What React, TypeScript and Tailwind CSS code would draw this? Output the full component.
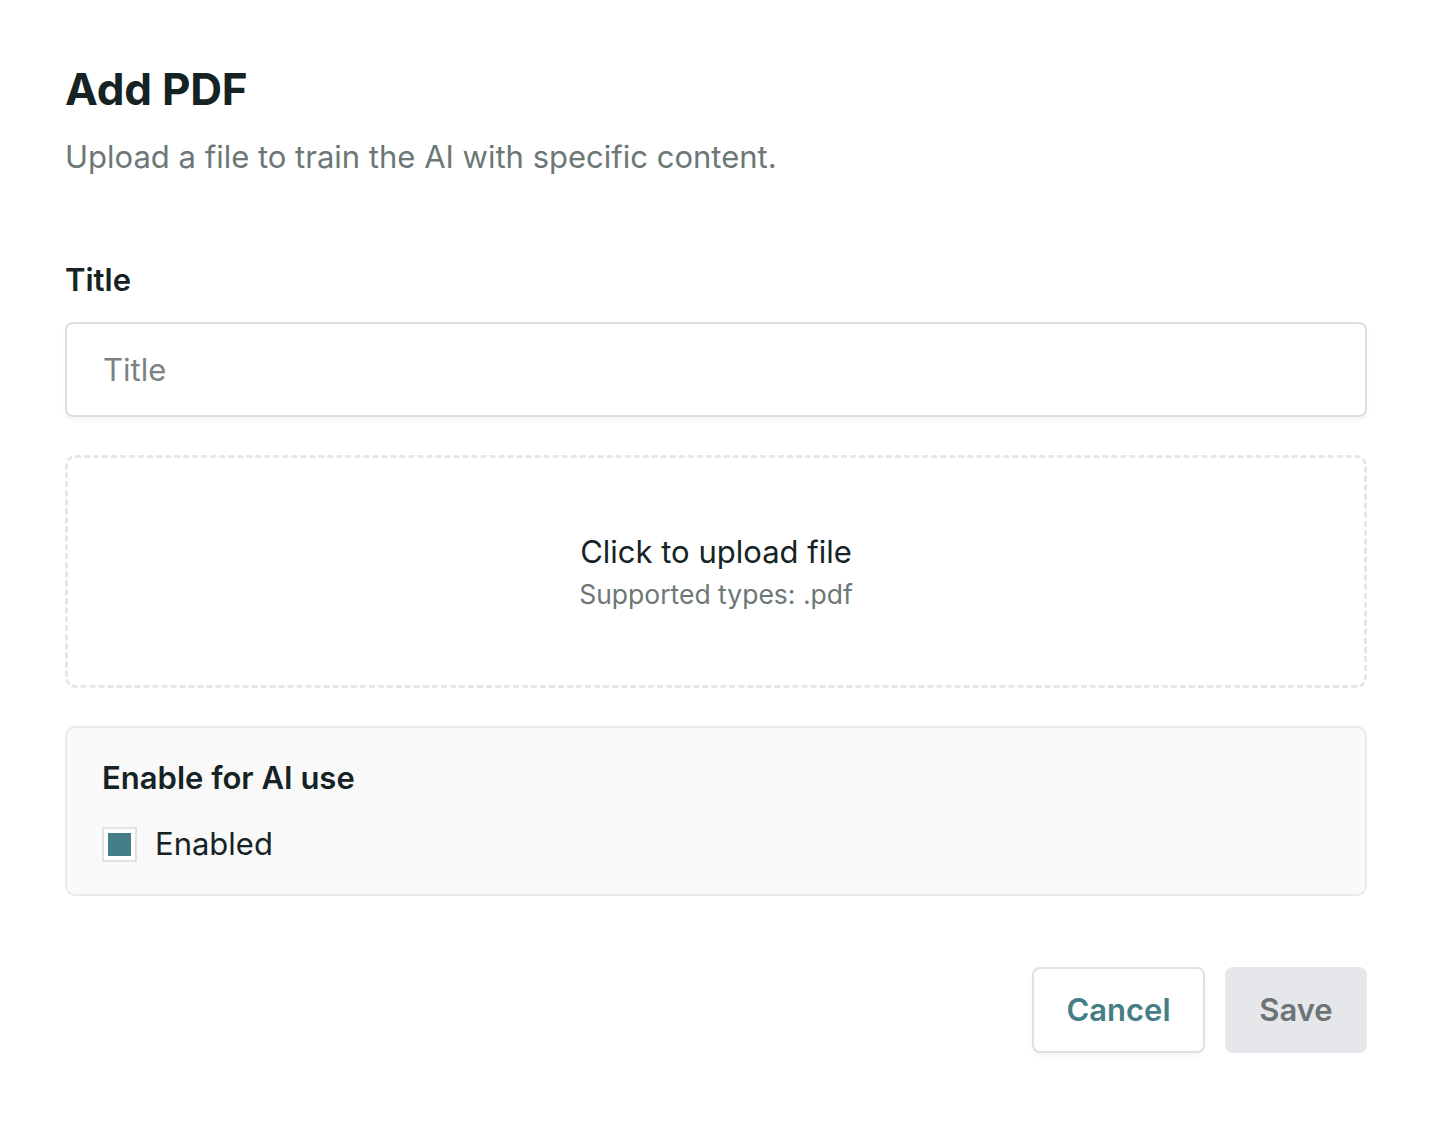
import React, { useState } from "react";

const font = { fontFamily: "Inter, 'Noto Sans', sans-serif" };

export default function App() {
  const [title, setTitle] = useState("");
  const [enabled, setEnabled] = useState(true);

  return (
    <div
      className="min-h-screen bg-white pl-[65px] pr-[63px] pt-[61px] pb-16 text-[#152325]"
      style={font}
    >
      <h1 className="text-[44px] font-bold leading-[56px] tracking-[-0.2px]">
        Add PDF
      </h1>
      <p className="mt-[20px] text-[31px] leading-[40px] text-[#6c7777]">
        Upload a file to train the AI with specific content.
      </p>

      <label className="mt-[83px] block text-[31px] font-semibold leading-[40px]">
        Title
      </label>
      <input
        value={title}
        onChange={(e) => setTitle(e.target.value)}
        placeholder="Title"
        className="mt-[22px] block h-[95px] w-full rounded-[8px] border-2 border-[#dcdfe2] bg-white px-[36px] text-[31px] shadow-[0_3px_4px_rgba(0,0,0,0.04)] outline-none placeholder:text-[#7a8384]"
      />

      <button className="mt-[38px] flex h-[233px] w-full flex-col items-center justify-center rounded-[10px] border-[3px] border-dashed border-[#e6e7e9]">
        <span className="text-[31px] leading-[40px] text-[#152325]">
          Click to upload file
        </span>
        <span className="mt-[5px] text-[26.5px] leading-[34px] text-[#6c7777]">
          Supported types: .pdf
        </span>
      </button>

      <div className="mt-[38px] rounded-[10px] border-2 border-[#e9eaeb] bg-[#f9f9f9] px-[35px] pt-[30px] pb-[30px]">
        <div className="text-[31px] font-semibold leading-[40px]">
          Enable for AI use
        </div>
        <label className="mt-[26px] flex cursor-pointer items-center gap-[18px]">
          <span
            onClick={() => setEnabled(!enabled)}
            className="flex h-[35px] w-[35px] items-center justify-center border-2 border-[#dfe3e6] bg-white"
          >
            {enabled && <span className="h-[23px] w-[23px] bg-[#457e86]" />}
          </span>
          <span className="text-[31px] leading-[40px]">Enabled</span>
        </label>
      </div>

      <div className="mt-[71px] flex justify-end gap-[20px]">
        <button className="h-[86px] w-[173px] rounded-[8px] border-2 border-[#dfe1e4] bg-white text-[31px] font-semibold text-[#457e86] shadow-[0_3px_4px_rgba(0,0,0,0.04)]">
          Cancel
        </button>
        <button className="h-[86px] w-[142px] rounded-[8px] bg-[#e6e7ea] text-[31px] font-semibold text-[#6c7475]">
          Save
        </button>
      </div>
    </div>
  );
}
